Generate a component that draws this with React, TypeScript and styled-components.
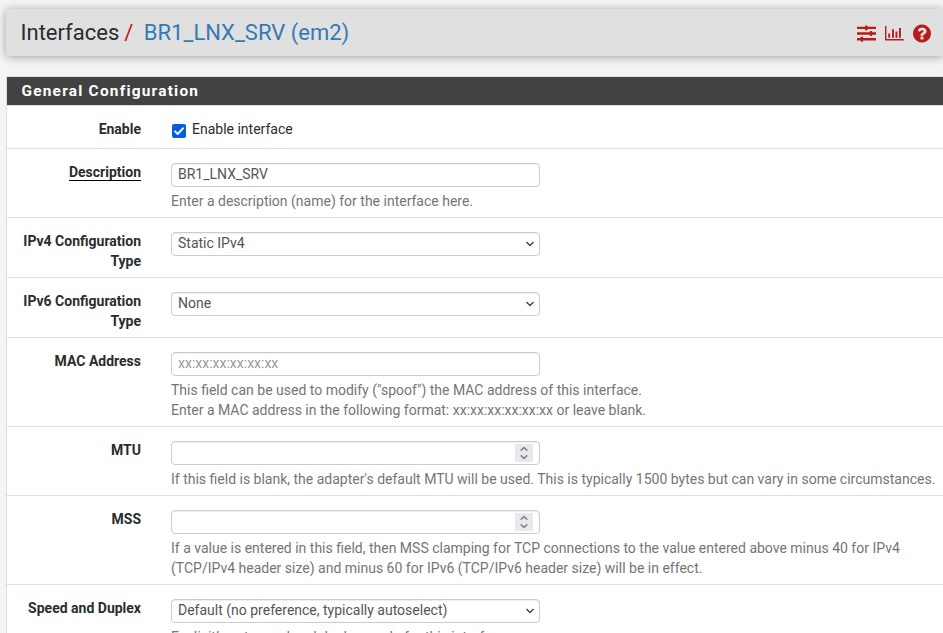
import React from "react";
import styled, { createGlobalStyle, css } from "styled-components";

const GlobalStyle = createGlobalStyle`
  * { box-sizing: border-box; }
  html, body { margin: 0; height: 633px; overflow: hidden; background: #f4f4f4; }
  body { font: 14px/20px Roboto, "Liberation Sans", sans-serif; color: #2c2c2c; }
`;

const Page = styled.div`
  height: 633px;
  overflow: hidden;
  padding: 9px 0 0 6px;
`;

const Header = styled.header`
  display: flex;
  align-items: center;
  justify-content: space-between;
  height: 47px;
  padding: 0 12.500px 0 14.500px;
  background: #e0e0e0;
  border-radius: 2px 0 0 2px;
  box-shadow: 0 1px 10px rgba(0, 0, 0, 0.35);
`;

const Breadcrumb = styled.h1`
  display: flex;
  margin: 0;
  font-size: 22px;
  font-weight: 400;
  line-height: 26px;
  white-space: pre;
`;

const Slash = styled.span`
  margin: 0 10.500px 0 5px;
  color: #b71c1c;
`;

const PageLink = styled.a`
  color: #337ab7;
`;

const Actions = styled.nav`
  display: flex;
  align-items: center;
  gap: 9px;
  padding-top: 1px;
  color: #b71c1c;
`;

const Icon = styled.svg<{ $w: number }>`
  display: block;
  width: ${(p) => p.$w}px;
  height: 21px;
  fill: currentColor;
`;

const Panel = styled.section`
  margin-top: 20px;
  border: 1px solid #ddd;
  border-right: 0;
  background: #fff;
`;

const PanelTitle = styled.h2`
  margin: 0;
  height: 29px;
  padding: 4px 14.500px;
  border-bottom: 1px solid #ddd;
  background: #424242;
  color: #fff;
  font-size: 15.400px;
  font-weight: 700;
  line-height: 20px;
  letter-spacing: 1.230px;
`;

const Row = styled.div<{ $height: number }>`
  display: grid;
  grid-template-columns: 134px 1fr;
  column-gap: 30px;
  height: ${(p) => p.$height}px;
  padding-top: 14px;
  border-bottom: 1px solid #e0e0e0;
`;

const Label = styled.div`
  margin-top: -1px;
  font-weight: 700;
  text-align: right;
`;

const Required = styled.span`
  display: inline-block;
  height: 19px;
  border-bottom: 1px solid #000;
`;

const control = css`
  display: flex;
  align-items: center;
  justify-content: space-between;
  width: 369px;
  height: 24px;
  border: 1px solid #ccc;
  border-radius: 4px;
  background: #fff;
  box-shadow: inset 0 1px 1px rgba(0, 0, 0, 0.075);
  color: #555;
  font: 14px/20px Roboto, "Liberation Sans", sans-serif;
`;

const TextField = styled.input`
  ${control}
  display: block;
  padding: 0 6px 2px;
  outline: 0;
  &::placeholder { color: #999; opacity: 1; }
`;

const SelectBox = styled.div`
  ${control}
  padding: 0 4px 2px 6px;
`;

const Chevron = styled.svg`
  margin-top: 2px;
`;

const NumberBox = styled.div`
  ${control}
  justify-content: flex-end;
  padding-right: 6px;
`;

const Spinner = styled.span`
  display: flex;
  width: 18px;
  height: 18px;
  background: #e9e9ed;
`;

const Help = styled.p`
  margin: 4px 0 0;
  color: #757575;
  white-space: nowrap;
`;

const CheckLabel = styled.label`
  display: flex;
  height: 18px;
  margin-top: -1px;
  padding-left: 1px;
  gap: 6px;
`;

const CheckIcon = styled.svg`
  width: 14px;
  height: 14px;
  margin-top: 5px;
`;

function Stepper() {
  return (
    <Spinner>
      <svg width="18" height="18" fill="none" stroke="#85858b" strokeWidth="1.6">
        <path d="M5.7 6.7 9 3.7l3.3 3M5.7 11.3 9 14.3l3.3-3" />
      </svg>
    </Spinner>
  );
}

function Select({ value }: { value: string }) {
  return (
    <SelectBox>
      <span>{value}</span>
      <Chevron width="10" height="8" fill="none" stroke="#444" strokeWidth="1.4">
        <path d="m1.5 2 3.500 3.500 3.500-3.500" />
      </Chevron>
    </SelectBox>
  );
}

interface FieldProps {
  label: string;
  height: number;
  required?: boolean;
  help?: React.ReactNode;
  children: React.ReactNode;
}

function Field({ label, height, required, help, children }: FieldProps) {
  return (
    <Row $height={height}>
      <Label>{required ? <Required>{label}</Required> : label}</Label>
      <div>
        {children}
        {help && <Help>{help}</Help>}
      </div>
    </Row>
  );
}

export default function App() {
  return (
    <>
      <GlobalStyle />
      <Page>
        <Header>
          <Breadcrumb>
            <span>Interfaces</span>
            <Slash>/</Slash>
            <PageLink>BR1_LNX_SRV (em2)</PageLink>
          </Breadcrumb>
          <Actions>
            <Icon $w={19} viewBox="0 0 19 21">
              <path d="M0 3.700h19v2.400H0zM0 9.300h19v2.400H0zM0 15h19v2.400H0z" />
              <rect x="8" y="2.400" width="2.500" height="5" rx=".8" />
              <rect x="12.800" y="8" width="2.500" height="5" rx=".8" />
              <rect x="3.700" y="13.700" width="2.500" height="5" rx=".8" />
            </Icon>
            <Icon $w={19} viewBox="0 0 19 21">
              <path d="M0 3h1.400v13h17.300v1.500H0zM3.200 10.500h1.900v4.300H3.200zM7 6.200h1.900v8.600H7zM10.500 8.500h1.900v6.300h-1.900zM14 5h1.900v9.800H14z" />
            </Icon>
            <Icon $w={18} viewBox="0 0 1536 1792">
              <path d="M896 1376v-192q0-14-9-23t-23-9H672q-14 0-23 9t-9 23v192q0 14 9 23t23 9h192q14 0 23-9t9-23zm256-672q0-88-55.500-163T958 425t-170-41q-243 0-371 213-15 24 8 42l132 100q7 6 19 6 16 0 25-12 53-68 86-92 34-24 86-24 48 0 85.500 26t37.500 59q0 38-20 61t-68 45q-63 28-115.500 86.500T640 1020v36q0 14 9 23t23 9h192q14 0 23-9t9-23q0-19 21.500-49.500T972 957q32-18 49-28.500t46-35 44.500-48 28-60.500 12.500-81zm384 192q0 209-103 385.500T1153.500 1561 768 1664t-385.500-103T103 1281.500 0 896t103-385.500T382.500 231 768 128t385.500 103T1433 510.500 1536 896z" />
            </Icon>
          </Actions>
        </Header>
        <Panel>
          <PanelTitle>General Configuration</PanelTitle>
          <Field label="Enable" height={43}>
            <CheckLabel>
              <CheckIcon viewBox="0 0 14 14">
                <rect width="14" height="14" rx="2" fill="#0060df" />
                <path d="m3 7.300 2.700 2.700L11 4.300" fill="none" stroke="#fff" strokeWidth="1.900" strokeLinecap="round" strokeLinejoin="round" />
              </CheckIcon>
              Enable interface
            </CheckLabel>
          </Field>
          <Field label="Description" height={69} required help="Enter a description (name) for the interface here.">
            <TextField defaultValue="BR1_LNX_SRV" />
          </Field>
          <Field label="IPv4 Configuration Type" height={60}>
            <Select value="Static IPv4" />
          </Field>
          <Field label="IPv6 Configuration Type" height={60}>
            <Select value="None" />
          </Field>
          <Field
            label="MAC Address"
            height={89}
            help={<>This field can be used to modify ("spoof") the MAC address of this interface.<br />Enter a MAC address in the following format: xx:xx:xx:xx:xx:xx or leave blank.</>}
          >
            <TextField placeholder="xx:xx:xx:xx:xx:xx" />
          </Field>
          <Field
            label="MTU"
            height={69}
            help="If this field is blank, the adapter's default MTU will be used. This is typically 1500 bytes but can vary in some circumstances."
          >
            <NumberBox><Stepper /></NumberBox>
          </Field>
          <Field
            label="MSS"
            height={89}
            help={<>If a value is entered in this field, then MSS clamping for TCP connections to the value entered above minus 40 for IPv4<br />(TCP/IPv4 header size) and minus 60 for IPv6 (TCP/IPv6 header size) will be in effect.</>}
          >
            <NumberBox><Stepper /></NumberBox>
          </Field>
          <Field label="Speed and Duplex" height={89} help="Explicitly set speed and duplex mode for this interface.">
            <Select value="Default (no preference, typically autoselect)" />
          </Field>
        </Panel>
      </Page>
    </>
  );
}
